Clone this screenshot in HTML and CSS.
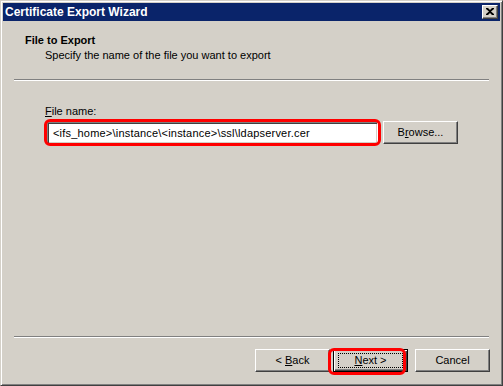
FILE: index.html
```html
<html>
<head>
    <meta charset="UTF-8" />
    <title>Certificate Export Wizard</title>
    <link rel="stylesheet" href="styles.css">
</head>
<body>
    <div class="window">
        <div class="titlebar">
            <span class="title">Certificate Export Wizard</span>
            <span class="close">
                <svg width="8" height="7" viewBox="0 0 8 7">
                    <path d="M0 0h2l2 2 2-2h2v1L5 3.5 8 6v1H6L4 5 2 7H0V6l3-2.5L0 1z" fill="#000"/>
                </svg>
            </span>
        </div>

        <div class="header">
            <div class="head-title">File to Export</div>
            <div class="head-sub">Specify the name of the file you want to export</div>
        </div>
        <div class="sep"></div>

        <div class="content">
            <label class="field-label"><u>F</u>ile name:</label>
            <div class="field-row">
                <div class="textbox">&lt;ifs_home&gt;\instance\&lt;instance&gt;\ssl\ldapserver.cer</div>
                <div class="btn"><span>B<u>r</u>owse...</span></div>
                <div class="mark mark-field"></div>
            </div>
        </div>

        <div class="sep"></div>
        <div class="footer">
            <div class="btn"><span>&lt; <u>B</u>ack</span></div>
            <div class="btn btn-default"><span class="focus"><span><u>N</u>ext &gt;</span></span>
                <div class="mark mark-next"></div>
            </div>
            <div class="btn btn-cancel"><span>Cancel</span></div>
        </div>
    </div>
</body>
</html>
```

FILE: styles.css
```css
body {
    margin: 0;
    font-family: "Liberation Sans", "DejaVu Sans", sans-serif;
    font-size: 11px;
    color: #000;
}
.window {
    width: 503px;
    height: 386px;
    box-sizing: border-box;
    background: #d4d0c8;
    border: 1px solid;
    border-color: #d4d0c8 #404040 #404040 #d4d0c8;
    box-shadow: inset 1px 1px #fff, inset -1px -1px #808080;
    padding: 2px;
    display: flex;
    flex-direction: column;
}
.titlebar {
    height: 18px;
    background: #0a246a;
    color: #fff;
    display: flex;
    align-items: center;
    justify-content: space-between;
    padding: 0 2px 0 2px;
}
.title {
    font-weight: bold;
    font-size: 12px;
}
.close {
    width: 16px;
    height: 14px;
    box-sizing: border-box;
    background: #d4d0c8;
    border: 1px solid;
    border-color: #fff #404040 #404040 #fff;
    box-shadow: inset -1px -1px #808080;
    display: flex;
    align-items: center;
    justify-content: center;
    padding: 0 1px 1px 0;
}
.header {
    height: 58px;
    padding: 13px 0 0 22px;
    box-sizing: border-box;
}
.head-title {
    font-weight: bold;
    height: 15px;
}
.head-sub {
    padding-left: 20px;
}
.sep {
    margin: 0 11px;
    border-top: 1px solid #808080;
    border-bottom: 1px solid #fff;
    height: 0;
}
.content {
    flex: 1;
    padding: 24px 0 0 42px;
}
.field-label {
    display: block;
    height: 14px;
}
.field-row {
    position: relative;
    display: flex;
    align-items: flex-start;
    margin-top: 2px;
}
.textbox {
    width: 331px;
    height: 22px;
    box-sizing: border-box;
    background: #fff;
    border: 1px solid;
    border-color: #808080 #fff #fff #808080;
    box-shadow: inset 1px 1px #404040, inset -1px -1px #d4d0c8;
    padding: 4px 0 0 5px;
    margin-left: 2px;
    margin-top: 1px;
    letter-spacing: 0.2px;
}
.btn {
    position: relative;
    width: 75px;
    height: 23px;
    box-sizing: border-box;
    border: 1px solid;
    border-color: #fff #404040 #404040 #fff;
    box-shadow: inset -1px -1px #808080;
    display: flex;
    align-items: center;
    justify-content: center;
    padding-bottom: 1px;
}
.field-row .btn {
    margin-left: 5px;
}
.footer {
    display: flex;
    justify-content: flex-end;
    gap: 3px;
    padding: 11px 10px 11px 0;
}
.btn-cancel {
    margin-left: 4px;
}
.btn-default {
    border: 1px solid #000;
    box-shadow: inset 1px 1px #fff, inset -1px -1px #404040, inset -2px -2px #808080;
}
.focus {
    border: 1px dotted #000;
    width: 63px;
    height: 13px;
    display: flex;
    align-items: center;
    justify-content: center;
}
.mark {
    position: absolute;
    border: 3px solid #ff0000;
    border-radius: 6px;
}
.mark-field {
    left: -1px;
    top: -2px;
    width: 331px;
    height: 21px;
}
.mark-next {
    left: -6px;
    top: -2px;
    width: 72px;
    height: 21px;
}
```
